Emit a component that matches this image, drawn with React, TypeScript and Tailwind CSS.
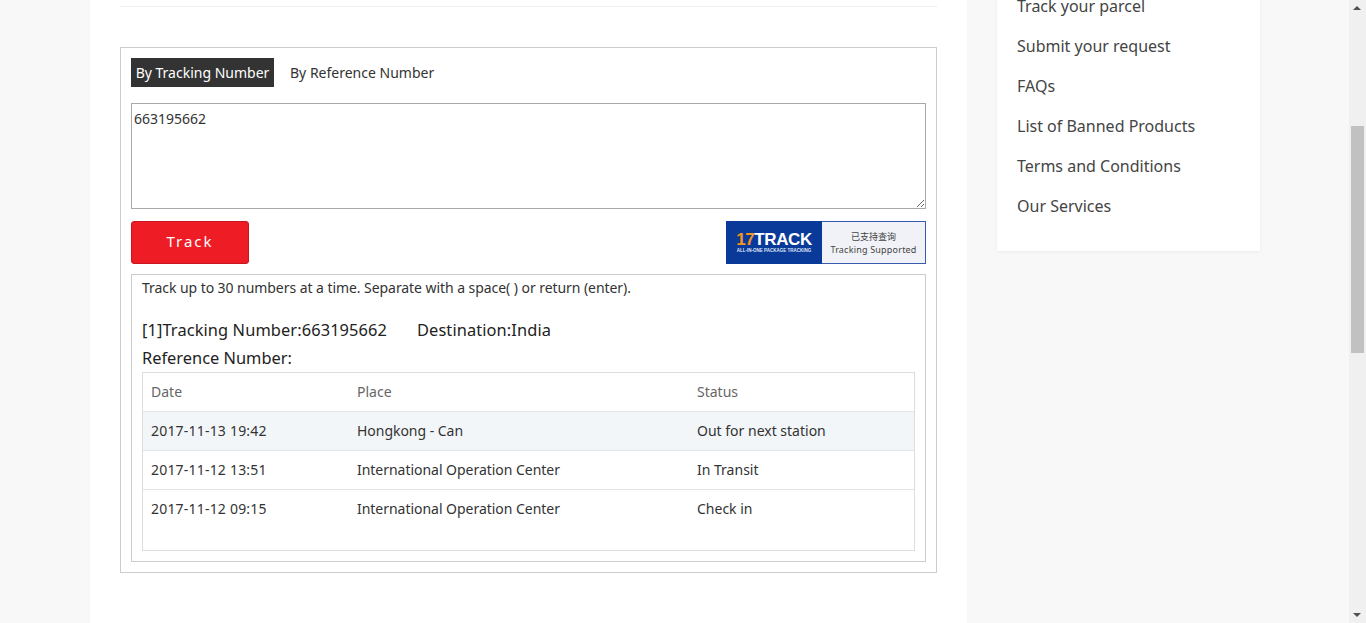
import React from 'react';

const sideLinks = [
  'Track your parcel',
  'Submit your request',
  'FAQs',
  'List of Banned Products',
  'Terms and Conditions',
  'Our Services',
];

const rows = [
  { date: '2017-11-13 19:42', place: 'Hongkong - Can', status: 'Out for next station' },
  { date: '2017-11-12 13:51', place: 'International Operation Center', status: 'In Transit' },
  { date: '2017-11-12 09:15', place: 'International Operation Center', status: 'Check in' },
];

function TrackBadge() {
  return (
    <div className="flex h-[43px] w-[200px] border border-[#3a5cb0] bg-[#f0f2f7]">
      <div className="-ml-px -my-px flex h-[43px] w-[96px] flex-col items-center justify-center bg-[#0a3a99] pt-[2px]">
        <div className="text-[17px] leading-[15px] font-black tracking-[-0.4px] font-['Liberation_Sans',sans-serif] text-white">
          <span className="text-[#f7941d]">17</span>
          <span>TRACK</span>
        </div>
        <div className="text-[4.5px] leading-[8px] font-bold whitespace-nowrap font-['Liberation_Sans',sans-serif] text-[#dfe6f5]">
          ALL-IN-ONE PACKAGE TRACKING
        </div>
      </div>
      <div className="flex flex-1 flex-col items-center justify-center text-[#444] pt-[1px]">
        <div className="text-[9px] leading-[13px] font-['Noto_Sans_CJK_SC',sans-serif]">已支持查询</div>
        <div className="text-[9px] leading-[13px] tracking-[0.2px]">Tracking Supported</div>
      </div>
    </div>
  );
}

function Scrollbar() {
  return (
    <div className="relative h-full w-[17px] shrink-0 bg-[#f0f0f0] pt-[126px]">
      <svg className="absolute left-[4px] top-[6px]" width="8" height="4" viewBox="0 0 8 4">
        <path d="M4 0 L8 4 L0 4 Z" fill="#505050" />
      </svg>
      <div className="ml-[2px] h-[227px] w-[13px] bg-[#c1c1c1]" />
      <svg className="absolute left-[4px] bottom-[6px]" width="8" height="4" viewBox="0 0 8 4">
        <path d="M0 0 L8 0 L4 4 Z" fill="#505050" />
      </svg>
    </div>
  );
}

export default function App() {
  return (
    <div className="flex h-[623px] w-[1366px] overflow-hidden bg-[#f8f8f8] font-['Noto_Sans',sans-serif] text-[14px] text-[#333]">
      <div className="flex flex-1 items-start pl-[90px]">
        <main className="h-[623px] w-[877px] bg-white px-[30px] pt-[6px]">
          <div className="h-px bg-[#eeeeee]" />
          <section className="mt-[40px] h-[526px] border border-[#cccccc] px-[10px] pt-[10px]">
            <div className="flex h-[29px] items-center">
              <div className="flex h-full w-[143px] items-center justify-center bg-[#333333] text-white">
                By Tracking Number
              </div>
              <div className="ml-[16px]">By Reference Number</div>
            </div>

            <textarea
              readOnly
              defaultValue="663195662"
              className="mt-[16px] block h-[106px] w-[795px] border border-[#aaaaaa] px-[2px] pt-[5px] text-[14px] leading-[19px] text-[#333] outline-none"
            />

            <div className="mt-[12px] flex items-start justify-between">
              <button className="h-[43px] w-[118px] rounded-[3px] border border-[#c8161e] bg-[#ee1c25] pb-[2px] text-[15px] tracking-[2px] text-white">
                Track
              </button>
              <TrackBadge />
            </div>

            <div className="mt-[10px] h-[288px] w-[795px] border border-[#cccccc] px-[10px]">
              <p className="mt-[3px] text-[14px] leading-[19px] tracking-[-0.06px]">
                Track up to 30 numbers at a time. Separate with a space( ) or return (enter).
              </p>
              <div className="mt-[19px] flex text-[16.4px] leading-[28px] font-[450] tracking-[0.1px] text-[#222]">
                <span>[1]Tracking Number:663195662</span>
                <span className="ml-[30px]">Destination:India</span>
              </div>
              <div className="text-[16.4px] leading-[28px] font-[450] text-[#222]">Reference Number:</div>

              <div className="h-[179px] w-[773px] border border-[#dddddd]">
                <div className="flex h-[39px] items-center border-b border-[#e4e4e4] pb-[2px] text-[#666]">
                  <div className="w-[206px] pl-[8px]">Date</div>
                  <div className="w-[340px] pl-[8px]">Place</div>
                  <div className="flex-1 pl-[8px]">Status</div>
                </div>
                {rows.map((row, i) => (
                  <div
                    key={row.date}
                    className={`flex h-[39px] items-center border-b border-[#e4e4e4] pb-[2px] last:border-b-0 ${i === 0 ? 'bg-[#f3f6f9]' : ''}`}
                  >
                    <div className="w-[206px] pl-[8px] tracking-[0.2px]">{row.date}</div>
                    <div className="w-[340px] pl-[8px] tracking-[-0.03px]">{row.place}</div>
                    <div className="flex-1 pl-[8px]">{row.status}</div>
                  </div>
                ))}
              </div>
            </div>
          </section>
        </main>

        <aside className="ml-[30px] w-[263px] bg-white pb-[25px] pl-[20px] shadow-[0_1px_3px_rgba(0,0,0,0.06)] -mt-[14px]">
          {sideLinks.map((link) => (
            <div key={link} className="text-[16px] leading-[40px] text-[#444]">
              {link}
            </div>
          ))}
        </aside>
      </div>
      <Scrollbar />
    </div>
  );
}
